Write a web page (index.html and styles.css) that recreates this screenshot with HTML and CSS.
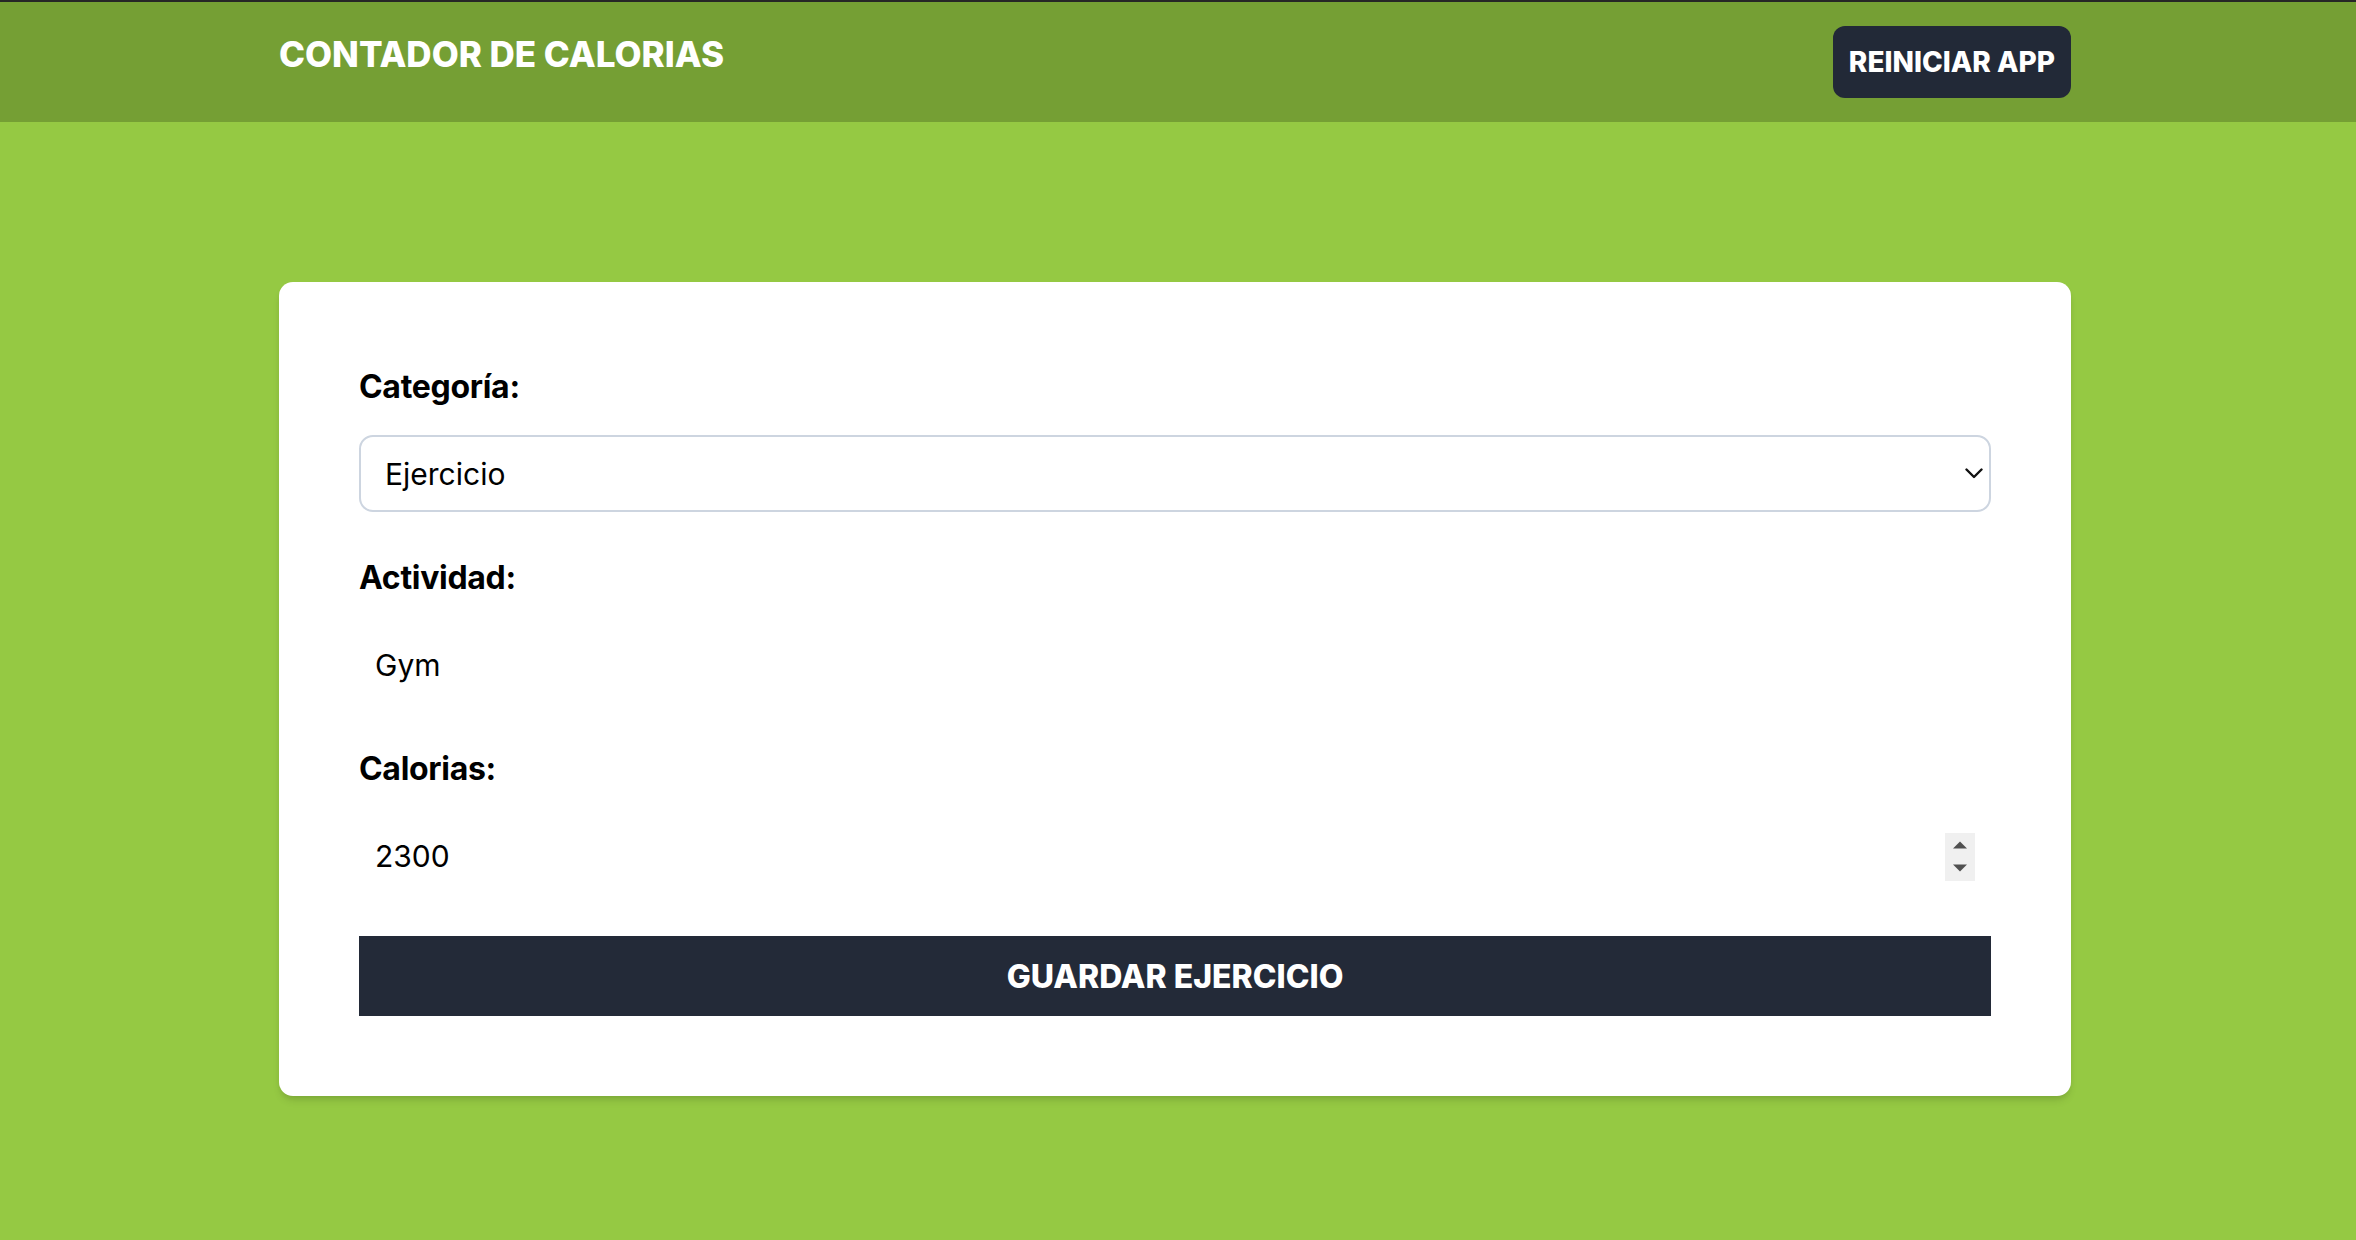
FILE: index.html
```html
<!DOCTYPE html>
<html lang="es">
<head>
<meta charset="utf-8">
<title>Contador de Calorias</title>
<link rel="stylesheet" href="styles.css">
</head>
<body>
<header class="header">
  <div class="container header-inner">
    <h1 class="title">CONTADOR DE CALORIAS</h1>
    <button class="reset-btn" type="button">REINICIAR APP</button>
  </div>
</header>
<main class="main">
  <div class="container">
    <form class="card">
      <div class="field">
        <label class="label" for="category">Categoría:</label>
        <div class="select-wrap">
          <select id="category" class="select">
            <option>Ejercicio</option>
            <option>Comida</option>
          </select>
          <svg class="chevron" width="18" height="11" viewBox="0 0 18 11"><polyline points="1.5,1.5 9,9 16.5,1.5" fill="none" stroke="#111" stroke-width="2.4" stroke-linecap="round" stroke-linejoin="round"/></svg>
        </div>
      </div>
      <div class="field">
        <label class="label" for="activity">Actividad:</label>
        <input id="activity" class="input" type="text" value="Gym">
      </div>
      <div class="field">
        <label class="label" for="calories">Calorias:</label>
        <div class="number-wrap">
          <input id="calories" class="input" type="number" value="2300">
          <span class="spinner">
            <svg width="30" height="48" viewBox="0 0 30 48"><polygon points="8,15.5 22,15.5 15,8.5" fill="#505050"/><polygon points="8,31.5 22,31.5 15,38.5" fill="#505050"/></svg>
          </span>
        </div>
      </div>
      <button class="save-btn" type="button">GUARDAR EJERCICIO</button>
    </form>
  </div>
</main>
</body>
</html>
```
FILE: styles.css
```css
html, body {
  margin: 0;
  padding: 0;
}
body {
  background: #95c943;
  border-top: 2px solid #262626;
  min-height: 100vh;
  box-sizing: border-box;
  font-family: Inter, "Noto Sans", "Liberation Sans", sans-serif;
  color: #000;
}
.container {
  width: 1792px;
  margin-left: calc(50% - 899px);
}
.header {
  background: #759f34;
  padding: 24px 0;
}
.header-inner {
  display: flex;
  justify-content: space-between;
  align-items: flex-start;
}
.title {
  margin: 0;
  color: #fff;
  font-size: 35px;
  line-height: 56px;
  font-weight: 800;
}
.reset-btn {
  height: 72px;
  padding: 0 16px;
  border: 0;
  border-radius: 12px;
  background: #222937;
  color: #fff;
  font-family: inherit;
  font-size: 28px;
  font-weight: 800;
}
.main {
  padding-top: 160px;
}
.card {
  background: #fff;
  border-radius: 14px;
  padding: 81px 80px 80px;
  display: flex;
  flex-direction: column;
  gap: 42px;
  box-shadow: 0 6px 9px -2px rgba(0, 0, 0, 0.12), 0 3px 6px -3px rgba(0, 0, 0, 0.1);
}
.field {
  display: flex;
  flex-direction: column;
  gap: 24px;
}
.label {
  font-size: 32px;
  line-height: 48px;
  font-weight: 700;
  letter-spacing: -0.3px;
}
.select-wrap,
.number-wrap {
  position: relative;
}
.select {
  -webkit-appearance: none;
  appearance: none;
  width: 100%;
  height: 77px;
  box-sizing: border-box;
  border: 2px solid #cdd5e0;
  border-radius: 14px;
  background: #fff;
  padding: 0 24px;
  font-family: inherit;
  font-size: 30px;
  color: #000;
  outline: none;
}
.chevron {
  position: absolute;
  right: 8px;
  top: 33px;
}
.input {
  width: 100%;
  height: 77px;
  box-sizing: border-box;
  border: 0;
  padding: 0 16px;
  background: #fff;
  font-family: inherit;
  font-size: 30px;
  color: #000;
  outline: none;
  -moz-appearance: textfield;
}
.input::-webkit-inner-spin-button,
.input::-webkit-outer-spin-button {
  -webkit-appearance: none;
  margin: 0;
}
.spinner {
  position: absolute;
  right: 16px;
  top: 16px;
  width: 30px;
  height: 48px;
  background: #f0f0f0;
  display: flex;
}
.save-btn {
  height: 80px;
  border: 0;
  background: #232a38;
  color: #fff;
  font-family: inherit;
  font-size: 32px;
  font-weight: 800;
}
```
